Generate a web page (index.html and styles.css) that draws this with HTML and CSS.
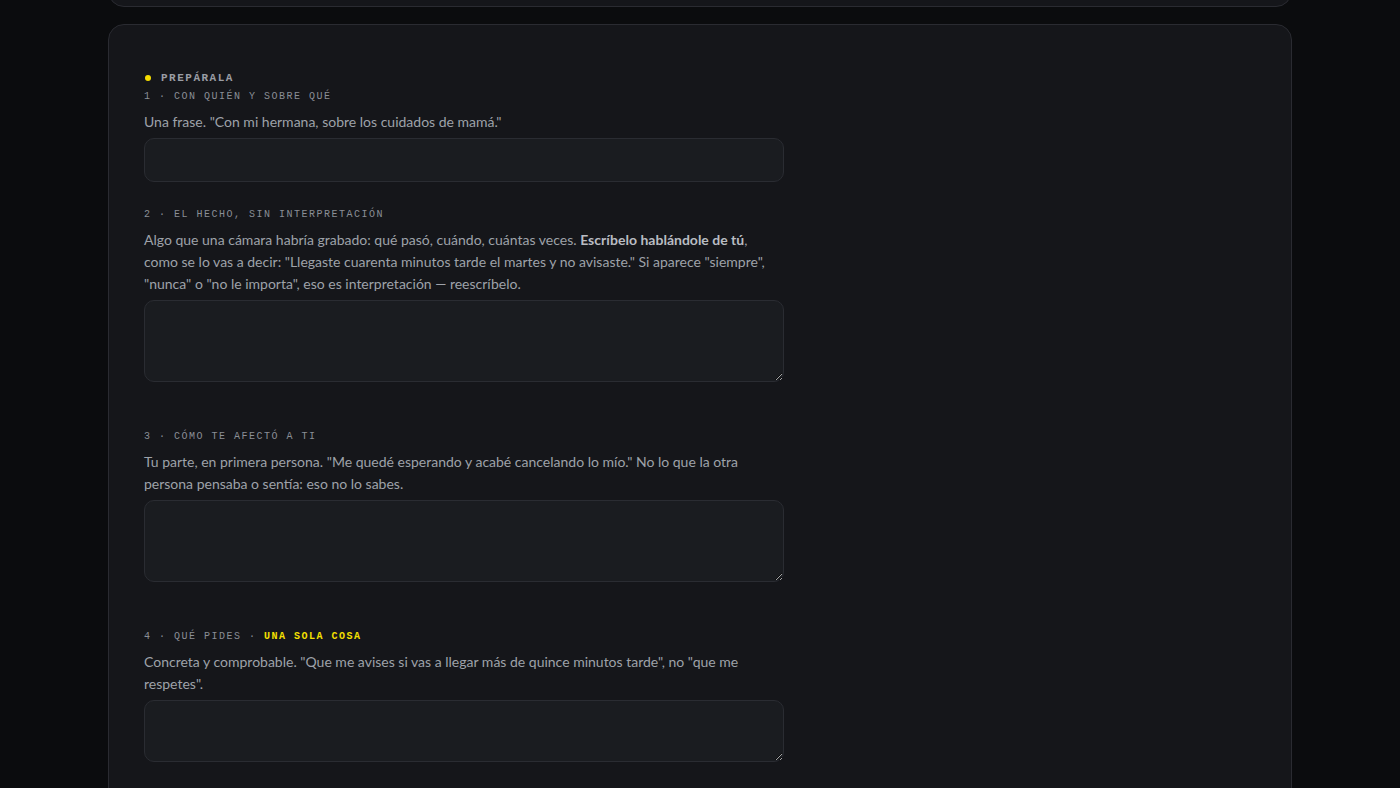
FILE: index.html
```html
<!DOCTYPE html>
<html lang="es">
  <head>
    <meta charset="utf-8" />
    <meta name="viewport" content="initial-scale=1, width=device-width" />
    <title>Prepárala</title>
    <link rel="stylesheet" href="styles.css">
  </head>
  <body>
    <main class="page">
      <section class="card card-prev"></section>

      <section class="card">
        <h2 class="step-title"><span class="dot"></span>Prepárala</h2>

        <div class="field field-first">
          <label class="field-label" for="quien">1 · Con quién y sobre qué</label>
          <p class="field-help">Una frase. "Con mi hermana, sobre los cuidados de mamá."</p>
          <input class="field-input" id="quien" type="text" />
        </div>

        <div class="field">
          <label class="field-label" for="hecho">2 · El hecho, sin interpretación</label>
          <p class="field-help">Algo que una cámara habría grabado: qué pasó, cuándo, cuántas veces. <strong>Escríbelo hablándole de tú</strong>, como se lo vas a decir: "Llegaste cuarenta minutos tarde el martes y no avisaste." Si aparece "siempre", "nunca" o "no le importa", eso es interpretación — reescríbelo.</p>
          <textarea class="field-input" id="hecho" rows="3"></textarea>
        </div>

        <div class="field">
          <label class="field-label" for="afecto">3 · Cómo te afectó a ti</label>
          <p class="field-help">Tu parte, en primera persona. "Me quedé esperando y acabé cancelando lo mío." No lo que la otra persona pensaba o sentía: eso no lo sabes.</p>
          <textarea class="field-input" id="afecto" rows="3"></textarea>
        </div>

        <div class="field">
          <label class="field-label" for="pides">4 · Qué pides · <span class="accent">Una sola cosa</span></label>
          <p class="field-help">Concreta y comprobable. "Que me avises si vas a llegar más de quince minutos tarde", no "que me respetes".</p>
          <textarea class="field-input" id="pides" rows="2"></textarea>
        </div>
      </section>
    </main>
  </body>
</html>
```

FILE: styles.css
```css
body {
  background-color: #0b0c0e;
  font-family: Lato, "Noto Sans", sans-serif;
  font-size: 14px;
  color: #9ea2a9;
  margin: 0;
}
.page {
  max-width: 1184px;
  margin: -41px auto 0;
  display: flex;
  flex-direction: column;
  gap: 17px;
}
.card {
  background-color: #15161a;
  border: 1px solid #2a2b31;
  border-radius: 16px;
  padding: 46px 35px 60px;
}
.card-prev {
  height: 46px;
  padding: 0;
}
.step-title {
  display: flex;
  align-items: center;
  gap: 10px;
  margin: 0 0 5px;
  font-family: "Liberation Mono", "DejaVu Sans Mono", monospace;
  font-size: 11px;
  line-height: 14px;
  font-weight: 700;
  letter-spacing: 1.5px;
  text-transform: uppercase;
  color: #9a9da4;
}
.dot {
  width: 6px;
  height: 6px;
  border-radius: 50%;
  background-color: #f5dc00;
  margin-left: 1px;
}
.field {
  width: 640px;
  margin-top: 48px;
}
.field-first {
  margin-top: 0;
}
.field-first + .field {
  margin-top: 26px;
}
.field-label {
  display: block;
  font-family: "Liberation Mono", "DejaVu Sans Mono", monospace;
  font-size: 10px;
  line-height: 14px;
  letter-spacing: 1.5px;
  text-transform: uppercase;
  color: #8a8e96;
}
.accent {
  color: #f5e000;
  font-weight: 700;
}
.field-help {
  margin: 7px 0 5px;
  line-height: 22px;
}
.field-help strong {
  color: #b9bcc2;
}
.field-input {
  display: block;
  box-sizing: border-box;
  width: 640px;
  height: 44px;
  margin: 0;
  padding: 10px 12px;
  background-color: #1a1c20;
  border: 1px solid #2a2c32;
  border-radius: 10px;
  color: #c3c6cc;
  font-family: inherit;
  font-size: 14px;
  line-height: 20px;
  outline: none;
}
textarea.field-input {
  height: auto;
  resize: vertical;
}
```
